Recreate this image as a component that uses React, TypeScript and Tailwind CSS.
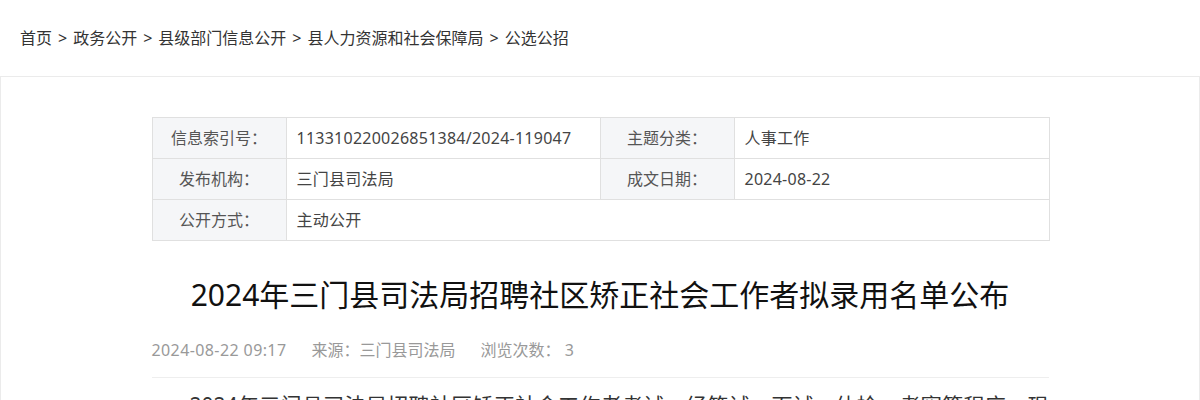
import React from "react";

const crumbs = ["首页", "政务公开", "县级部门信息公开", "县人力资源和社会保障局", "公选公招"];

function Label({ children }: { children: React.ReactNode }) {
  return (
    <td className="w-[134px] h-[41px] border border-[#e0e0e0] bg-[#f5f6f8] text-center text-[#555] text-[16px] p-0">
      {children}
    </td>
  );
}

function Value({ children, colSpan }: { children: React.ReactNode; colSpan?: number }) {
  return (
    <td
      colSpan={colSpan}
      className="h-[41px] border border-[#e0e0e0] text-left text-[#444] text-[16px] pl-[10px] pr-2 tracking-[0.25px]"
    >
      {children}
    </td>
  );
}

export default function App() {
  return (
    <div
      className="w-[1200px] h-[400px] overflow-hidden bg-white"
      style={{ fontFamily: '"Noto Sans", "Noto Sans CJK SC", sans-serif' }}
    >
      {/* breadcrumb */}
      <div className="h-[76px] flex items-center pl-[20px] text-[16px] text-[#333]">
        {crumbs.map((c, i) => (
          <React.Fragment key={c}>
            {i > 0 && <span className="mx-[6px]">&gt;</span>}
            <span>{c}</span>
          </React.Fragment>
        ))}
      </div>

      <div className="border border-[#ebebeb] h-[400px] pt-[40px]">
        <div className="w-[897px] mx-auto">
          <table className="w-full border-collapse table-fixed">
            <colgroup>
              <col className="w-[134px]" />
              <col className="w-[314px]" />
              <col className="w-[134px]" />
              <col className="w-[315px]" />
            </colgroup>
            <tbody>
              <tr>
                <Label>信息索引号：</Label>
                <Value>113310220026851384/2024-119047</Value>
                <Label>主题分类：</Label>
                <Value>人事工作</Value>
              </tr>
              <tr>
                <Label>发布机构：</Label>
                <Value>三门县司法局</Value>
                <Label>成文日期：</Label>
                <Value>2024-08-22</Value>
              </tr>
              <tr>
                <Label>公开方式：</Label>
                <Value colSpan={3}>主动公开</Value>
              </tr>
            </tbody>
          </table>

          <h1 className="mt-[30px] text-center text-[30px] leading-[48px] text-[#111] font-normal">
            2024年三门县司法局招聘社区矫正社会工作者拟录用名单公布
          </h1>

          {/* meta */}
          <div className="mt-[14px] h-[34px] flex items-center text-[16px] text-[#999] border-b border-[#eeeeee] pb-[10px] box-content">
            <span className="mr-[25px] tracking-[0.4px]">2024-08-22 09:17</span>
            <span className="mr-[25px]">来源：三门县司法局</span>
            <span>浏览次数： 3</span>
          </div>

          <p className="mt-[9px] text-[21px] leading-[36px] text-[#333] text-justify indent-[38px]">
            2024年三门县司法局招聘社区矫正社会工作者考试，经笔试、面试、体检、考察等程序，现将拟录用人员名单公示如下：
          </p>
        </div>
      </div>
    </div>
  );
}
